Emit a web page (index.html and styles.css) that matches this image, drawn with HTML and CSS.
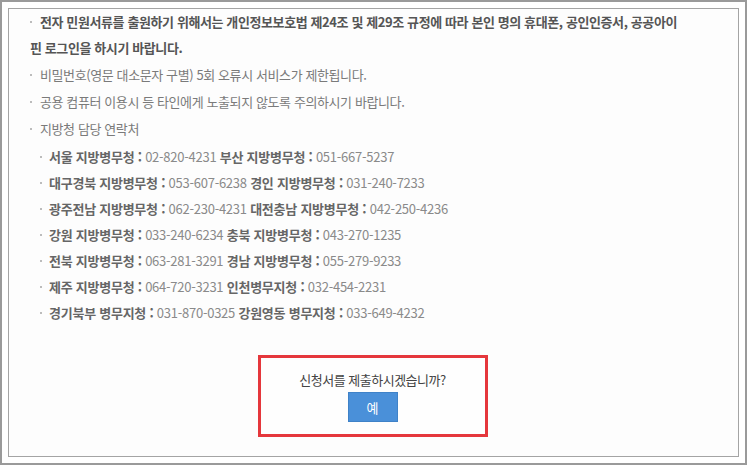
FILE: index.html
```html
<!DOCTYPE html>
<html lang="ko">
<head>
<meta charset="utf-8">
<link rel="stylesheet" href="styles.css">
</head>
<body>
<div class="frame">
  <div class="panel">
    <ul class="notes">
      <li class="strong">전자 민원서류를 출원하기 위해서는 개인정보보호법 제24조 및 제29조 규정에 따라 본인 명의 휴대폰, 공인인증서, 공공아이<br>핀 로그인을 하시기 바랍니다.</li>
      <li>비밀번호(영문 대소문자 구별) 5회 오류시 서비스가 제한됩니다.</li>
      <li>공용 컴퓨터 이용시 등 타인에게 노출되지 않도록 주의하시기 바랍니다.</li>
      <li>지방청 담당 연락처
        <ul class="contacts">
          <li><b>서울 지방병무청 :</b> 02-820-4231 <b>부산 지방병무청 :</b> 051-667-5237</li>
          <li><b>대구경북 지방병무청 :</b> 053-607-6238 <b>경인 지방병무청 :</b> 031-240-7233</li>
          <li><b>광주전남 지방병무청 :</b> 062-230-4231 <b>대전충남 지방병무청 :</b> 042-250-4236</li>
          <li><b>강원 지방병무청 :</b> 033-240-6234 <b>충북 지방병무청 :</b> 043-270-1235</li>
          <li><b>전북 지방병무청 :</b> 063-281-3291 <b>경남 지방병무청 :</b> 055-279-9233</li>
          <li><b>제주 지방병무청 :</b> 064-720-3231 <b>인천병무지청 :</b> 032-454-2231</li>
          <li><b>경기북부 병무지청 :</b> 031-870-0325 <b>강원영동 병무지청 :</b> 033-649-4232</li>
        </ul>
      </li>
    </ul>
    <div class="confirm">
      <p class="question">신청서를 제출하시겠습니까?</p>
      <button class="yes" type="button">예</button>
    </div>
  </div>
</div>
</body>
</html>
```
FILE: styles.css
```css
html, body {
  margin: 0;
  padding: 0;
  background: #ffffff;
}
body {
  font-family: "Noto Sans CJK KR", "Noto Sans", sans-serif;
}
.frame {
  width: 747px;
  height: 465px;
  box-sizing: border-box;
  border: 2px solid #9a9a9a;
  padding: 6px;
  background: #ffffff;
}
.panel {
  width: 731px;
  height: 449px;
  box-sizing: border-box;
  border: 1px solid #a4a4a4;
  background: #fdfdfd;
  display: flex;
  flex-direction: column;
}
.notes {
  list-style: none;
  margin: 0;
  padding: 0 0 0 21px;
  font-size: 13px;
  line-height: 26px;
  letter-spacing: -0.4px;
  color: #7a7a7a;
}
.notes > li {
  margin-bottom: 1px;
  white-space: nowrap;
}
.notes > li::before {
  content: "";
  display: inline-block;
  width: 2px;
  height: 2px;
  background: #bcbcbc;
  margin: 0 8px 0 0;
  vertical-align: 4px;
}
.notes > li.strong {
  color: #555555;
  font-weight: bold;
}
.contacts {
  list-style: none;
  margin: 2px 0 0 0;
  padding: 0 0 0 10px;
  letter-spacing: -0.25px;
}
.contacts li {
  color: #8a8a8a;
}
.contacts li::before {
  content: "";
  display: inline-block;
  width: 2px;
  height: 2px;
  background: #bcbcbc;
  margin: 0 7px 0 0;
  vertical-align: 4px;
}
.contacts b {
  color: #666666;
  font-weight: bold;
}
.confirm {
  align-self: center;
  margin: 28px 0 0 -2px;
  width: 230px;
  height: 82px;
  box-sizing: border-box;
  border: 3px solid #e5373c;
  background: #fefefe;
  display: flex;
  flex-direction: column;
  align-items: center;
  padding-top: 12px;
}
.question {
  margin: 0;
  font-size: 13px;
  line-height: 20px;
  letter-spacing: -0.5px;
  color: #444444;
}
.yes {
  margin-top: 2px;
  width: 50px;
  height: 30px;
  border: 1px solid #3f82c8;
  background: #4a90d9;
  color: #ffffff;
  font-family: "Noto Sans CJK KR", sans-serif;
  font-size: 13px;
  padding: 0;
  cursor: pointer;
}
```
